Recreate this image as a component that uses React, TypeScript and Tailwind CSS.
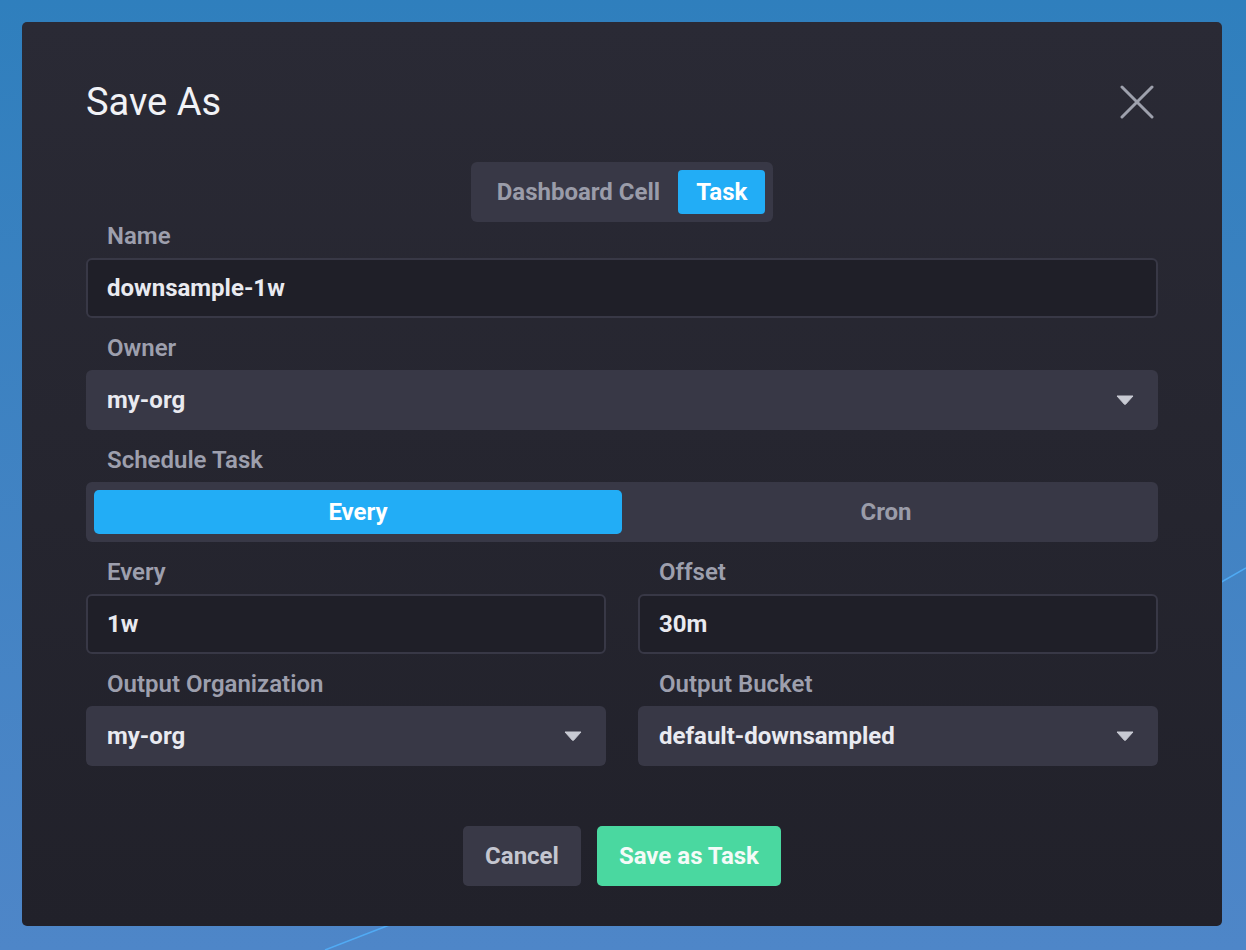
import { useState } from "react";

const font = { fontFamily: "Roboto, 'Noto Sans', Arial, sans-serif" };

const Caret = () => (
  <svg width="18" height="10" viewBox="0 0 18 10" className="shrink-0">
    <path d="M1 1 L17 1 L9.6 9.2 Q9 9.8 8.4 9.2 Z" fill="#c8cad3" stroke="#c8cad3" strokeWidth="1" strokeLinejoin="round" />
  </svg>
);

const Label = ({ children }: { children: React.ReactNode }) => (
  <div className="h-9 pl-[21px] text-[24px] leading-7 font-semibold text-[#9d9fad]">{children}</div>
);

const TextInput = ({ value }: { value: string }) => (
  <div className="h-[60px] flex items-center px-[19px] rounded-[6px] border-2 border-[#383846] bg-[#1f1f28] text-[24px] font-bold text-[#e9eaf0]">
    {value}
  </div>
);

const Dropdown = ({ value }: { value: string }) => (
  <div className="h-[60px] flex items-center justify-between pl-[21px] pr-6 rounded-[6px] bg-[#383846] text-[24px] font-bold text-[#e9eaf0]">
    <span>{value}</span>
    <Caret />
  </div>
);

const App = () => {
  const [mode, setMode] = useState("task");
  const [schedule, setSchedule] = useState("every");

  return (
    <div className="relative min-h-[950px] w-full overflow-hidden bg-gradient-to-b from-[#2f7fbd] to-[#4e86c8] p-[22px]" style={font}>
      <svg className="absolute inset-0" width="1246" height="950">
        <line x1="325" y1="950" x2="392" y2="924" stroke="#52b4ff" strokeWidth="1.5" opacity="0.8" />
        <line x1="1218" y1="584" x2="1246" y2="568" stroke="#52b4ff" strokeWidth="1.5" opacity="0.8" />
      </svg>

      <div className="relative w-[1200px] rounded-[5px] bg-gradient-to-b from-[#2a2a35] to-[#21212a] px-16 pt-14 pb-10">
        <div className="flex items-center justify-between h-12">
          <h1 className="text-[38px] leading-[48px] font-normal text-[#f1f2f6]">Save As</h1>
          <button className="mr-[4px] text-[#9ea1ad]">
            <svg width="34" height="34" viewBox="0 0 34 34">
              <path d="M2 2 L32 32 M32 2 L2 32" stroke="currentColor" strokeWidth="3" strokeLinecap="round" />
            </svg>
          </button>
        </div>

        <div className="mt-9 flex justify-center">
          <div className="flex p-2 rounded-[6px] bg-[#383846]">
            <button
              onClick={() => setMode("cell")}
              className={`h-11 px-[18px] rounded-[4px] text-[24px] font-bold ${mode === "cell" ? "bg-[#22adf6] text-white" : "text-[#9a9ca9]"}`}
            >
              Dashboard Cell
            </button>
            <button
              onClick={() => setMode("task")}
              className={`h-11 px-[18px] rounded-[4px] text-[24px] font-bold ${mode === "task" ? "bg-[#22adf6] text-white" : "text-[#9a9ca9]"}`}
            >
              Task
            </button>
          </div>
        </div>

        <div className="mb-4">
          <Label>Name</Label>
          <TextInput value="downsample-1w" />
        </div>

        <div className="mt-4 mb-4">
          <Label>Owner</Label>
          <Dropdown value="my-org" />
        </div>

        <div className="mt-4 mb-4">
          <Label>Schedule Task</Label>
          <div className="h-[60px] grid grid-cols-2 p-2 rounded-[6px] bg-[#383846]">
            <button
              onClick={() => setSchedule("every")}
              className={`rounded-[5px] text-[24px] font-bold ${schedule === "every" ? "bg-[#22adf6] text-white" : "text-[#9a9ca9]"}`}
            >
              Every
            </button>
            <button
              onClick={() => setSchedule("cron")}
              className={`rounded-[5px] text-[24px] font-bold ${schedule === "cron" ? "bg-[#22adf6] text-white" : "text-[#9a9ca9]"}`}
            >
              Cron
            </button>
          </div>
        </div>

        <div className="mt-4 grid grid-cols-2 gap-x-8 gap-y-4">
          <div>
            <Label>Every</Label>
            <TextInput value="1w" />
          </div>
          <div>
            <Label>Offset</Label>
            <TextInput value="30m" />
          </div>
          <div>
            <Label>Output Organization</Label>
            <Dropdown value="my-org" />
          </div>
          <div>
            <Label>Output Bucket</Label>
            <Dropdown value="default-downsampled" />
          </div>
        </div>

        <div className="mt-[60px] flex justify-center gap-4">
          <button className="h-[60px] px-[22px] rounded-[5px] bg-[#393947] text-[24px] font-bold text-[#c4c6d0]">Cancel</button>
          <button className="h-[60px] px-[22px] rounded-[5px] bg-[#4ad8a0] text-[24px] font-bold text-[#f4fbf8]">Save as Task</button>
        </div>
      </div>
    </div>
  );
};

export default App;
